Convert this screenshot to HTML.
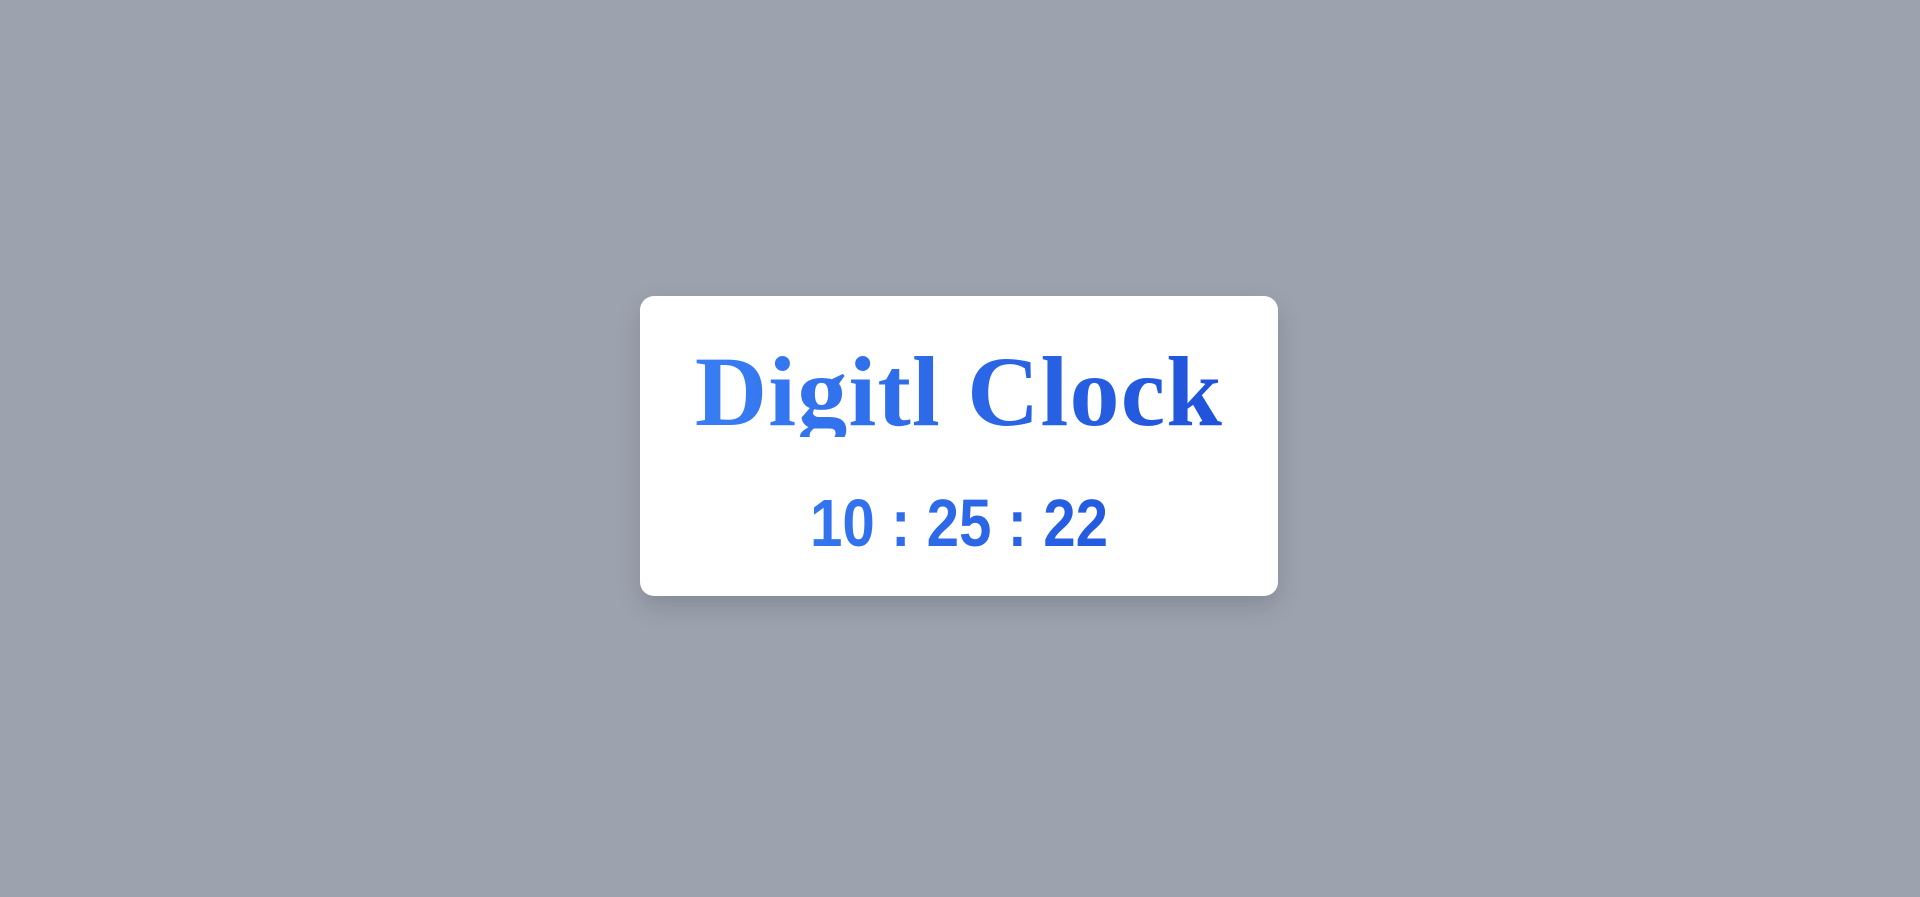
<!DOCTYPE html>
<html><head><style>
html,body{margin:0;width:1920px;height:897px;background:#9ca3af;overflow:hidden}
.card{position:absolute;left:640px;top:296px;width:638px;height:300px;background:#fff;border-radius:14px;box-shadow:0 10px 25px rgba(0,0,0,.15)}
.tw{position:absolute;left:0;top:0;width:638px;height:141px;overflow:hidden}
.title{position:absolute;left:0;width:638px;top:46px;text-align:center;font:bold 100px/1 "Liberation Serif",serif;letter-spacing:1.2px;white-space:nowrap;
background:linear-gradient(90deg,#3b82f6,#1d4ed8);-webkit-background-clip:text;background-clip:text;color:transparent}
.time{position:absolute;left:0;width:638px;top:194px;text-align:center;font:bold 67px/1 "Liberation Sans",sans-serif;white-space:nowrap;transform:scaleX(.87);
background:linear-gradient(90deg,#3b82f6,#1d4ed8);-webkit-background-clip:text;background-clip:text;color:transparent}
</style></head><body>
<div class="card">
<div class="tw"><div class="title">Digitl Clock</div></div>
<div class="time">10 : 25 : 22</div>
</div>
</body></html>
